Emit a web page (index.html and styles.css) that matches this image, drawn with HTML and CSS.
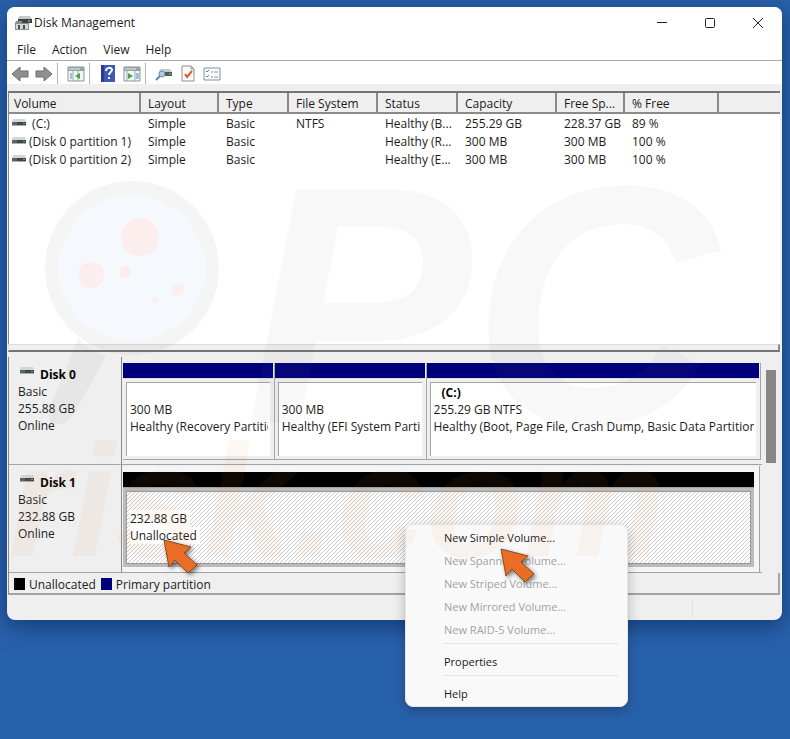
FILE: index.html
```
<!DOCTYPE html>
<html lang="en">
<head>
    <meta charset="UTF-8">
    <meta name="viewport" content="width=device-width, initial-scale=1.0">
    <title>Disk Management</title>
    <link rel="stylesheet" href="styles.css">
</head>
<body>
    <!-- shared drive icon -->
    <svg width="0" height="0" class="defs" aria-hidden="true">
        <symbol id="drive" viewBox="0 0 14 10">
            <path d="M1 1h12l1 3H0z" fill="#d3d6d6"/>
            <path d="M0 4h14v3H0z" fill="#3f4546"/>
            <path d="M0 4h5v3H0z" fill="#5d6364"/>
            <path d="M0 7h14v1H0z" fill="#a9adae"/>
            <path d="M11 5h2v1h-2z" fill="#58b851"/>
        </symbol>
        <symbol id="pointer" viewBox="0 0 40 40">
            <path d="M2 2l27 7-7 6 13 12-9 8-13-13-6 7z" fill="#e96d25" stroke="#8a4a20" stroke-width="1" stroke-linejoin="round"/>
        </symbol>
    </svg>

    <main class="window">
        <header class="title-bar">
            <svg class="app-icon" width="17" height="16" viewBox="0 0 17 16" aria-hidden="true">
                <path d="M4 1h11l2 3H3z" fill="#c6c9ca"/>
                <path d="M3 4h14v4H3z" fill="#3d4243"/>
                <path d="M13 5h2v2h-2z" fill="#43b33a"/>
                <path d="M1 6h6v2h7v7H0V8z" fill="#8b8f91"/>
                <path d="M1 9h12v5H1z" fill="#d5d8d9"/>
                <path d="M3 10h2v4H3zM8 10h2v4H8z" fill="#4a4e50"/>
            </svg>
            <h1>Disk Management</h1>
            <div class="window-buttons">
                <button type="button" aria-label="Minimize"><svg width="12" height="12" viewBox="0 0 12 12"><path d="M1 5.500h10"/></svg></button>
                <button type="button" aria-label="Maximize"><svg width="12" height="12" viewBox="0 0 12 12"><rect x="1.500" y="1.500" width="9" height="9" rx="1"/></svg></button>
                <button type="button" aria-label="Close"><svg width="12" height="12" viewBox="0 0 12 12"><path d="M1 1l10 10M11 1L1 11"/></svg></button>
            </div>
        </header>

        <nav class="menu-bar">
            <button type="button">File</button>
            <button type="button">Action</button>
            <button type="button">View</button>
            <button type="button">Help</button>
        </nav>

        <div class="toolbar">
            <button type="button" aria-label="Back">
                <svg width="18" height="16" viewBox="0 0 18 16"><path d="M1 8l8-7v4h8v6H9v4z" fill="#8f8f8f" stroke="#6c6c6c"/></svg>
            </button>
            <button type="button" aria-label="Forward">
                <svg width="18" height="16" viewBox="0 0 18 16"><path d="M17 8L9 1v4H1v6h8v4z" fill="#8f8f8f" stroke="#6c6c6c"/></svg>
            </button>
            <span class="divider"></span>
            <button type="button" aria-label="Show console tree">
                <svg width="18" height="16" viewBox="0 0 18 16">
                    <path d="M1 1h16v14H1z" fill="#f4f6f7" stroke="#8b9398"/>
                    <path d="M1 1h16v4H1z" fill="#98a1a7"/>
                    <path d="M2 3h11" stroke="#e5e9eb"/>
                    <path d="M6 5v10M11 5v10" stroke="#9aa8b4"/>
                    <path d="M3 8h2M3 10h2M3 12h2" stroke="#4c86bd"/>
                    <path d="M13 7v6l-5-3z" fill="#46a83a"/>
                </svg>
            </button>
            <span class="divider"></span>
            <button type="button" aria-label="Help">
                <svg width="14" height="17" viewBox="0 0 14 17">
                    <path d="M0 0h14v17H0z" fill="#3f57b5"/>
                    <path d="M0 0h3v17H0z" fill="#2b3c8f"/>
                    <path d="M5 6c0-4 6-4 6-1 0 2-3 2-3 5" fill="none" stroke="#fff" stroke-width="2"/>
                    <path d="M7 12h2v2H7z" fill="#fff"/>
                </svg>
            </button>
            <button type="button" aria-label="Show action pane">
                <svg width="18" height="16" viewBox="0 0 18 16">
                    <path d="M1 1h16v14H1z" fill="#f4f6f7" stroke="#8b9398"/>
                    <path d="M1 1h16v4H1z" fill="#98a1a7"/>
                    <path d="M2 3h11" stroke="#e5e9eb"/>
                    <path d="M4 5v10M12 5v10" stroke="#9aa8b4"/>
                    <path d="M13 8h3M13 10h3M13 12h3" stroke="#4c86bd"/>
                    <path d="M5 7v6l5-3z" fill="#46a83a"/>
                </svg>
            </button>
            <span class="divider"></span>
            <button type="button" aria-label="Rescan disks">
                <svg width="18" height="16" viewBox="0 0 18 16">
                    <path d="M5 3h10l2 3H4z" fill="#c6cbcd"/>
                    <path d="M4 6h13v4H4z" fill="#50585b"/>
                    <path d="M14 7h2v2h-2z" fill="#43b33a"/>
                    <circle cx="7" cy="8" r="3" fill="#a9cce4" stroke="#6f8fa6"/>
                    <path d="M5 10l-4 4" stroke="#6486a5" stroke-width="2"/>
                </svg>
            </button>
            <button type="button" aria-label="Check">
                <svg width="14" height="17" viewBox="0 0 14 17">
                    <path d="M1 1h9l3 3v12H1z" fill="#fcfcfc" stroke="#8d8d8d"/>
                    <path d="M10 1v3h3" fill="none" stroke="#8d8d8d"/>
                    <path d="M4 9l2 3 5-6" fill="none" stroke="#e0592b" stroke-width="2"/>
                </svg>
            </button>
            <button type="button" aria-label="Properties">
                <svg width="18" height="14" viewBox="0 0 18 14">
                    <path d="M1 1h16v12H1z" fill="#fafbfc" stroke="#858f97"/>
                    <path d="M3 4l1 1 2-2M3 9l1 1 2-2" fill="none" stroke="#3f86c6"/>
                    <path d="M8 5h2M11 5h4M8 10h2M11 10h4" stroke="#8b9aa6"/>
                </svg>
            </button>
        </div>

        <section class="volume-list">
            <table>
                <colgroup>
                    <col class="c-volume"><col class="c-layout"><col class="c-type"><col class="c-fs"><col class="c-status"><col class="c-capacity"><col class="c-free"><col class="c-percent"><col>
                </colgroup>
                <thead>
                    <tr><th>Volume</th><th>Layout</th><th>Type</th><th>File System</th><th>Status</th><th>Capacity</th><th>Free Sp...</th><th>% Free</th><th></th></tr>
                </thead>
                <tbody>
                    <tr><td class="name"><svg width="14" height="10"><use href="#drive"/></svg>&nbsp;(C:)</td><td>Simple</td><td>Basic</td><td>NTFS</td><td>Healthy (B...</td><td>255.29 GB</td><td>228.37 GB</td><td>89 %</td><td></td></tr>
                    <tr><td class="name"><svg width="14" height="10"><use href="#drive"/></svg>(Disk 0 partition 1)</td><td>Simple</td><td>Basic</td><td></td><td>Healthy (R...</td><td>300 MB</td><td>300 MB</td><td>100 %</td><td></td></tr>
                    <tr><td class="name"><svg width="14" height="10"><use href="#drive"/></svg>(Disk 0 partition 2)</td><td>Simple</td><td>Basic</td><td></td><td>Healthy (E...</td><td>300 MB</td><td>300 MB</td><td>100 %</td><td></td></tr>
                </tbody>
            </table>
        </section>
        <div class="splitter"></div>

        <section class="disk-pane">
            <div class="disks">
                <div class="disk">
                    <div class="disk-label">
                        <h2><svg width="14" height="10"><use href="#drive"/></svg>Disk 0</h2>
                        <p>Basic</p>
                        <p>255.88 GB</p>
                        <p>Online</p>
                    </div>
                    <div class="partitions">
                        <div class="partition">
                            <div class="stripe"></div>
                            <div class="part-body"><strong></strong><p>300 MB</p><p>Healthy (Recovery Partition)</p></div>
                        </div>
                        <div class="partition">
                            <div class="stripe"></div>
                            <div class="part-body"><strong></strong><p>300 MB</p><p>Healthy (EFI System Partition)</p></div>
                        </div>
                        <div class="partition">
                            <div class="stripe"></div>
                            <div class="part-body"><strong>(C:)</strong><p>255.29 GB NTFS</p><p>Healthy (Boot, Page File, Crash Dump, Basic Data Partition)</p></div>
                        </div>
                    </div>
                </div>
                <div class="disk">
                    <div class="disk-label">
                        <h2><svg width="14" height="10"><use href="#drive"/></svg>Disk 1</h2>
                        <p>Basic</p>
                        <p>232.88 GB</p>
                        <p>Online</p>
                    </div>
                    <div class="partitions single">
                        <div class="partition selected">
                            <div class="stripe"></div>
                            <div class="part-body"><strong></strong><p><span>232.88 GB</span></p><p><span>Unallocated</span></p></div>
                        </div>
                    </div>
                </div>
            </div>
            <div class="scrollbar"><div class="thumb"></div></div>
        </section>

        <div class="legend">
            <span class="swatch unallocated"></span>Unallocated
            <span class="swatch primary"></span>Primary partition
        </div>
        <footer class="status-bar"><span></span><span></span></footer>
    </main>

    <div class="context-menu" role="menu">
        <button type="button" role="menuitem">New Simple Volume...</button>
        <button type="button" role="menuitem" disabled>New Spanned Volume...</button>
        <button type="button" role="menuitem" disabled>New Striped Volume...</button>
        <button type="button" role="menuitem" disabled>New Mirrored Volume...</button>
        <button type="button" role="menuitem" disabled>New RAID-5 Volume...</button>
        <hr>
        <button type="button" role="menuitem">Properties</button>
        <hr>
        <button type="button" role="menuitem">Help</button>
    </div>

    <svg class="watermark" width="775" height="613" viewBox="7 7 775 613" aria-hidden="true">
        <circle cx="132" cy="268" r="73" class="lens"/>
        <circle cx="132" cy="268" r="80" class="rim"/>
        <path d="M78 338L50 408q-5 18 10 16 10-2 16-14l30-54q-16-6-28-18z" class="grey"/>
        <g class="spots">
            <circle cx="140" cy="237" r="19"/>
            <circle cx="91" cy="275" r="13"/>
            <circle cx="125" cy="272" r="6"/>
            <circle cx="178" cy="290" r="6"/>
            <circle cx="155" cy="300" r="3"/>
        </g>
        <text x="245" y="423" class="mark-big">PC</text>
        <text x="8" y="556" class="mark-small">risk.com</text>
    </svg>

    <svg class="pointer first" width="40" height="40" aria-hidden="true"><use href="#pointer"/></svg>
    <svg class="pointer second" width="40" height="40" aria-hidden="true"><use href="#pointer"/></svg>
</body>
</html>
```
FILE: styles.css
```
* {
    box-sizing: border-box;
}
body {
    margin: 0;
    padding: 7px 8px 0 7px;
    min-height: 100vh;
    background-color: #2861ab;
    font-family: "Open Sans", "Noto Sans", sans-serif;
    font-size: 12px;
    line-height: 17px;
    color: #1c1c1c;
    position: relative;
    overflow: hidden;
}
h1, h2, p {
    margin: 0;
    font-size: 12px;
}
button {
    font: inherit;
    color: inherit;
    background: none;
    border: none;
    padding: 0;
}
.defs {
    position: absolute;
}

/* window */
.window {
    background-color: #efefef;
    border-radius: 8px;
    overflow: hidden;
    box-shadow: 0 6px 22px rgba(0, 20, 60, 0.5);
}
.title-bar {
    display: flex;
    align-items: center;
    height: 31px;
    padding-left: 8px;
    background-color: #fff;
}
.title-bar h1 {
    flex: 1;
    margin-left: 2px;
    font-weight: normal;
}
.window-buttons {
    display: flex;
}
.window-buttons button {
    display: flex;
    align-items: center;
    justify-content: center;
    width: 48px;
    height: 28px;
}
.window-buttons svg {
    fill: none;
    stroke: #222;
}
.menu-bar {
    display: flex;
    gap: 16px;
    height: 23px;
    padding: 0 10px;
    background-color: #fff;
    border-bottom: 1px solid #ababab;
}
.toolbar {
    display: flex;
    align-items: center;
    gap: 6px;
    height: 23px;
    padding: 2px 4px 0;
    background-color: #fff;
}
.toolbar button {
    display: flex;
    justify-content: center;
    min-width: 18px;
}
.divider {
    width: 1px;
    height: 21px;
    margin: 0 3px 0 -2px;
    background-color: #b5b5b5;
}

/* volume list */
.volume-list {
    margin: 7px 2px 0 1px;
    height: 253px;
    background-color: #fff;
    border-top: 2px solid #747474;
    border-left: 1px solid #8a8a8a;
}
table {
    width: 100%;
    border-collapse: separate;
    border-spacing: 0;
    table-layout: fixed;
}
.c-volume { width: 132px; }
.c-layout { width: 78px; }
.c-type { width: 70px; }
.c-fs { width: 89px; }
.c-status { width: 80px; }
.c-capacity { width: 99px; }
.c-free { width: 68px; }
.c-percent { width: 94px; }
th, td {
    padding: 0 0 0 7px;
    text-align: left;
    font-weight: normal;
    white-space: nowrap;
}
th {
    height: 20px;
    padding-top: 2px;
    background-color: #efefef;
    border-right: 2px solid #8a8a8a;
    border-bottom: 2px solid #8a8a8a;
}
th:first-child {
    padding-left: 5px;
}
th:last-child {
    border-right: none;
}
td {
    height: 18px;
}
td.name {
    padding-left: 3px;
}
.name svg {
    margin-right: 3px;
    vertical-align: 0;
}
.splitter {
    height: 8px;
    margin: 0 2px 0 1px;
    background-color: #efefef;
    border: 1px solid #dcdcdc;
    border-right: 2px solid #8a8a8a;
    border-bottom: 2px solid #747474;
}

/* graphical view */
.disk-pane {
    display: flex;
    margin: 5px 2px 0 1px;
    border-left: 1px solid #8a8a8a;
}
.disks {
    flex: 1;
    min-width: 0;
}
.disk {
    display: flex;
    height: 108px;
    border-bottom: 1px solid #a3a3a3;
}
.disk-label {
    width: 113px;
    padding: 9px 0 0 9px;
    border-right: 1px solid #8a8a8a;
}
.disk-label svg {
    margin-right: 6px;
    vertical-align: 3px;
}
.disk-label h2 {
    padding-left: 2px;
    color: #000;
}
.partitions {
    flex: 1;
    display: grid;
    grid-template-columns: 151fr 151fr 334fr;
    gap: 1px;
    min-width: 0;
    margin: 6px 1px 4px 1px;
    background-color: #a8a8a8;
    border-right: 1px solid #a3a3a3;
    border-bottom: 1px solid #a3a3a3;
}
.partitions.single {
    grid-template-columns: 1fr;
    margin: 1px 2px 0 1px;
    padding: 6px 5px 5px 0;
    background-color: #f5f5f5;
    border-bottom: none;
}
.partition {
    display: flex;
    flex-direction: column;
    min-width: 0;
    padding-right: 1px;
    background-color: #efefef;
}
.stripe {
    height: 16px;
    background-color: #00007b;
    border-bottom: 1px solid #ddd;
}
.part-body {
    flex: 1;
    margin: 3px;
    padding: 1px 2px 0 3px;
    background-color: #fff;
    border-top: 1px solid #a3a3a3;
    border-left: 1px solid #a3a3a3;
    overflow: hidden;
    white-space: nowrap;
}
.part-body p {
    overflow: hidden;
}
.part-body strong {
    display: block;
    height: 17px;
    padding-left: 8px;
    color: #000;
}
.selected {
    background-color: #bcbcbc;
    padding-right: 0;
}
.selected .stripe {
    background-color: #000;
    border-bottom-color: #a3a3a3;
}
.selected .part-body {
    border: 1px solid #999;
    background-color: #fff;
    background-image: linear-gradient(135deg, transparent 45%, #cdcdcd 45%, #cdcdcd 55%, transparent 55%);
    background-size: 4px 4px;
}
.selected span {
    display: inline-block;
    padding-right: 3px;
    background-color: #fff;
}
.scrollbar {
    width: 18px;
    padding: 13px 4px 0;
}
.thumb {
    height: 93px;
    background-color: #878787;
}
.legend {
    display: flex;
    align-items: center;
    height: 22px;
    margin: 0 2px 0 1px;
    padding: 2px 0 0 5px;
    border-left: 1px solid #8a8a8a;
    border-right: 2px solid #a3a3a3;
    border-bottom: 2px solid #a3a3a3;
}
.swatch {
    width: 11px;
    height: 12px;
    margin-right: 4px;
}
.unallocated {
    background-color: #000;
}
.primary {
    margin-left: 5px;
    background-color: #00007b;
}
.status-bar {
    display: grid;
    grid-template-columns: 1fr 90px;
    height: 25px;
    padding: 4px 0 2px;
}
.status-bar span + span {
    border-left: 1px solid #e2e2e2;
}

/* context menu over the window */
.context-menu {
    position: absolute;
    left: 405px;
    top: 524px;
    width: 223px;
    padding: 1px 9px 1px 38px;
    font-size: 11px;
    background-color: #f9f9f9;
    border: 1px solid #e6e6e6;
    border-radius: 8px;
    box-shadow: 0 4px 12px rgba(0, 0, 0, 0.25);
}
.context-menu button {
    display: block;
    width: 100%;
    height: 23px;
    text-align: left;
    color: #1a1a1a;
}
.context-menu button:disabled {
    color: #a2a2a2;
}
.context-menu hr {
    margin: 2px 0 6px;
    border: none;
    border-top: 1px solid #e3e3e3;
}

/* brand mark and pointers */
.watermark {
    position: absolute;
    left: 7px;
    top: 7px;
    pointer-events: none;
}
.lens {
    fill: rgba(60, 120, 220, 0.05);
}
.rim {
    fill: none;
    stroke: rgba(110, 120, 130, 0.07);
    stroke-width: 14px;
}
.grey {
    fill: rgba(110, 120, 130, 0.07);
}
.spots {
    fill: rgba(255, 232, 226, 0.6);
}
.mark-big, .mark-small {
    font-family: "Liberation Sans", Arial, sans-serif;
    font-weight: bold;
    font-style: italic;
}
.mark-big {
    font-size: 340px;
    fill: rgba(120, 120, 120, 0.05);
}
.mark-small {
    font-size: 160px;
    fill: rgba(240, 130, 70, 0.06);
}
.pointer {
    position: absolute;
    pointer-events: none;
    filter: drop-shadow(2px 2px 2px rgba(0, 0, 0, 0.5));
}
.first {
    left: 162px;
    top: 538px;
}
.second {
    left: 499px;
    top: 547px;
}
```
